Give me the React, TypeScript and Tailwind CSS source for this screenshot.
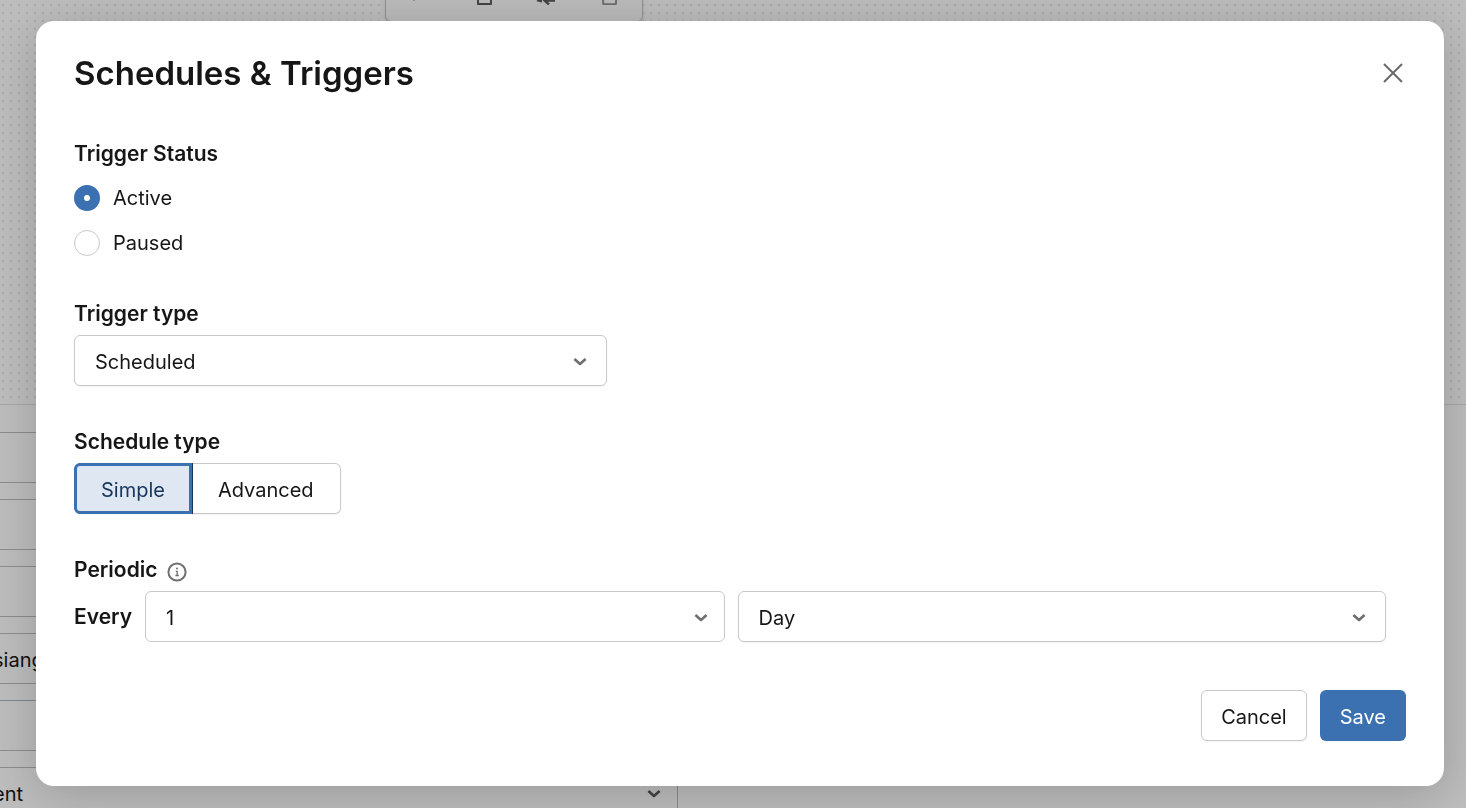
import { useState } from 'react'
import type { ReactNode, SelectHTMLAttributes } from 'react'
import clsx from 'clsx'

function ChevronIcon({ className }: { className?: string }) {
  return (
    <svg
      className={clsx('pointer-events-none absolute top-1/2 -mt-2 h-4 w-4', className)}
      viewBox="0 0 16 16"
      fill="none"
      stroke="currentColor"
      strokeWidth={2.6}
      strokeLinejoin="round"
      aria-hidden="true"
    >
      <path d="M2.4 6l5.6 5 5.6-5" />
    </svg>
  )
}

interface SelectProps extends SelectHTMLAttributes<HTMLSelectElement> {
  options: string[]
  wrapperClassName?: string
  chevronClassName?: string
}

function Select({ options, wrapperClassName, chevronClassName = 'right-[19px]', className, ...props }: SelectProps) {
  return (
    <div className={clsx('relative', wrapperClassName)}>
      <select
        className={clsx(
          'h-[51px] w-full appearance-none rounded-md border border-[#c9c9c9] bg-white pt-0.5 pr-12 pl-5 text-xl text-[#161616]',
          className
        )}
        {...props}
      >
        {options.map(option => (
          <option key={option}>{option}</option>
        ))}
      </select>
      <ChevronIcon className={clsx('text-[#6f6f6f]', chevronClassName)} />
    </div>
  )
}

function CanvasToolbar() {
  return (
    <div className="absolute -top-10 left-[385px] flex h-[62px] w-[258px] items-center justify-between rounded-md border border-[#c4c4c4] bg-[#fafafa] px-5 pt-1 text-[#5a5a5a] shadow-md">
      <button type="button" aria-label="Run">
        <svg className="h-6 w-6" viewBox="0 0 24 24" fill="currentColor">
          <path d="M7.5 2v18l13-9z" />
        </svg>
      </button>
      <button type="button" aria-label="Copy">
        <svg className="h-6 w-6" viewBox="0 0 24 24" fill="none" stroke="currentColor" strokeWidth={2} strokeLinejoin="round">
          <path d="M8 7h13v16H8z" />
        </svg>
      </button>
      <button type="button" aria-label="Replace">
        <svg className="h-6 w-6" viewBox="0 0 24 24" fill="none" stroke="currentColor" strokeWidth={2.4}>
          <path d="M3 19l5 1.4M21 19.6H11M14.5 15.5l-4 4 4.5 4" />
        </svg>
      </button>
      <button type="button" aria-label="Delete" className="text-[#929292]">
        <svg className="h-6 w-6" viewBox="0 0 24 24" fill="none" stroke="currentColor" strokeWidth={2} strokeLinejoin="round">
          <path d="M4 8l1.4 15.2h12.4L19.2 8z" />
        </svg>
      </button>
    </div>
  )
}

// Editor page that sits behind the modal
function Workspace() {
  const field = 'h-[51px] w-full border border-[#bcbcbc] bg-transparent px-5 pt-0.5 text-xl text-[#161616]'

  return (
    <div className="flex h-screen flex-col overflow-hidden bg-[#fcfcfc]">
      <div className="relative h-[404px] shrink-0 bg-[radial-gradient(circle,#e4e4e4_1px,transparent_1.5px)] bg-size-[8px_8px] bg-position-[-1px_1px]">
        <CanvasToolbar />
      </div>
      <div className="grow border-t border-[#dedede] pt-[27px]">
        <div className="-ml-7 flex w-[706px] flex-col gap-4">
          <input className={field} aria-label="Name" />
          <input className={field} aria-label="Description" />
          <input className={field} aria-label="Source" />
          <input className={field} aria-label="Owner" defaultValue="siang" />
          <input className={clsx(field, 'border-t-[#aab4c4]')} aria-label="Group" />
          <div className="relative">
            <select className={clsx(field, 'appearance-none')} aria-label="Kind">
              <option>ent</option>
            </select>
            <ChevronIcon className="right-4 text-[#5a5a5a]" />
          </div>
        </div>
      </div>
    </div>
  )
}

interface FieldProps {
  label: string
  htmlFor?: string
  children: ReactNode
}

function Field({ label, htmlFor, children }: FieldProps) {
  return (
    <div className="flex flex-col gap-[7px]">
      <label htmlFor={htmlFor} className="text-[21px] leading-7 font-semibold">
        {label}
      </label>
      {children}
    </div>
  )
}

export default function App() {
  const [status, setStatus] = useState('Active')
  const [scheduleType, setScheduleType] = useState('Simple')

  return (
    <div className="font-[Inter,sans-serif] text-[#161616]">
      <Workspace />

      <div className="fixed inset-0 overflow-auto bg-black/25 pt-[21px] pr-[22px] pl-9">
        <div
          role="dialog"
          aria-modal="true"
          aria-labelledby="dialog-title"
          className="rounded-[18px] bg-white px-[38px] pt-7 pb-[45px] shadow-[0_8px_50px_rgba(0,0,0,0.2)]"
        >
          <header className="flex items-center justify-between">
            <h1 id="dialog-title" className="text-[33px] leading-[48px] font-semibold">
              Schedules &amp; Triggers
            </h1>
            <button type="button" aria-label="Close" className="text-[#6a6a6a]">
              <svg className="h-[26px] w-[26px]" viewBox="0 0 26 26" fill="none" stroke="currentColor" strokeWidth={2}>
                <path d="M4 4l18 18M22 4L4 22" />
              </svg>
            </button>
          </header>

          <form className="mt-[43px]" onSubmit={e => e.preventDefault()}>
            <div className="flex flex-col gap-[42px] pr-5">
              <fieldset className="pb-px">
                <legend className="mb-4 text-[21px] leading-7 font-semibold">Trigger Status</legend>
                <div className="flex flex-col items-start gap-[17px]">
                  {['Active', 'Paused'].map(option => (
                    <label key={option} className="flex items-center gap-[13px] text-xl leading-7">
                      <input
                        type="radio"
                        name="status"
                        value={option}
                        checked={status === option}
                        onChange={() => setStatus(option)}
                        className="h-[26px] w-[26px] appearance-none rounded-full border border-[#c9c9c9] bg-white checked:border-[10px] checked:border-[#3b71b0]"
                      />
                      {option}
                    </label>
                  ))}
                </div>
              </fieldset>

              <Field label="Trigger type" htmlFor="trigger-type">
                <Select
                  id="trigger-type"
                  options={['Scheduled']}
                  wrapperClassName="w-full max-w-[533px]"
                  className="shadow-xs"
                />
              </Field>

              <div role="group" aria-labelledby="schedule-type" className="flex flex-col gap-[7px]">
                <span id="schedule-type" className="text-[21px] leading-7 font-semibold">
                  Schedule type
                </span>
                <div className="flex">
                  {['Simple', 'Advanced'].map(option => (
                    <button
                      key={option}
                      type="button"
                      aria-pressed={scheduleType === option}
                      onClick={() => setScheduleType(option)}
                      className={clsx(
                        'h-[51px] pt-0.5 text-xl first:rounded-l-md last:rounded-r-md',
                        scheduleType === option
                          ? 'relative border-3 border-[#3b71b0] bg-[#dfe7f3] px-6 text-[#17365d] shadow-[1px_0_0_#17365d]'
                          : 'border border-[#c9c9c9] bg-white px-[26px] shadow-xs first:border-r-0 last:border-l-0'
                      )}
                    >
                      {option}
                    </button>
                  ))}
                </div>
              </div>

              <div className="flex flex-col gap-[7px]">
                <div className="flex items-center gap-[10px] text-[21px] leading-7 font-semibold">
                  Periodic
                  <svg className="mt-1 h-5 w-5 text-[#6f6f6f]" viewBox="0 0 20 20" fill="none" stroke="currentColor" strokeWidth={2}>
                    <circle cx="10" cy="10" r="8.6" />
                    <path d="M8.8 9.4h1.4v4M8.4 13.5h3.4" strokeWidth={1.3} />
                    <circle cx="10" cy="6.6" r="1" fill="currentColor" stroke="none" />
                  </svg>
                </div>
                <div className="flex items-center gap-[13px]">
                  <label htmlFor="interval" className="text-[21px] leading-7 font-semibold">
                    Every
                  </label>
                  <Select
                    id="interval"
                    options={['1']}
                    wrapperClassName="flex-[580]"
                    chevronClassName="right-4"
                  />
                  <Select
                    options={['Day']}
                    aria-label="Interval unit"
                    wrapperClassName="flex-[649]"
                    className="shadow-xs"
                  />
                </div>
              </div>
            </div>

            <footer className="mt-12 flex justify-end gap-[13px]">
              <button type="button" className="h-[51px] rounded-md border border-[#c9c9c9] bg-white px-[19px] pt-0.5 text-xl shadow-xs">
                Cancel
              </button>
              <button type="submit" className="h-[51px] rounded-md bg-[#3b71b0] px-5 pt-0.5 text-xl text-white">
                Save
              </button>
            </footer>
          </form>
        </div>
      </div>
    </div>
  )
}
